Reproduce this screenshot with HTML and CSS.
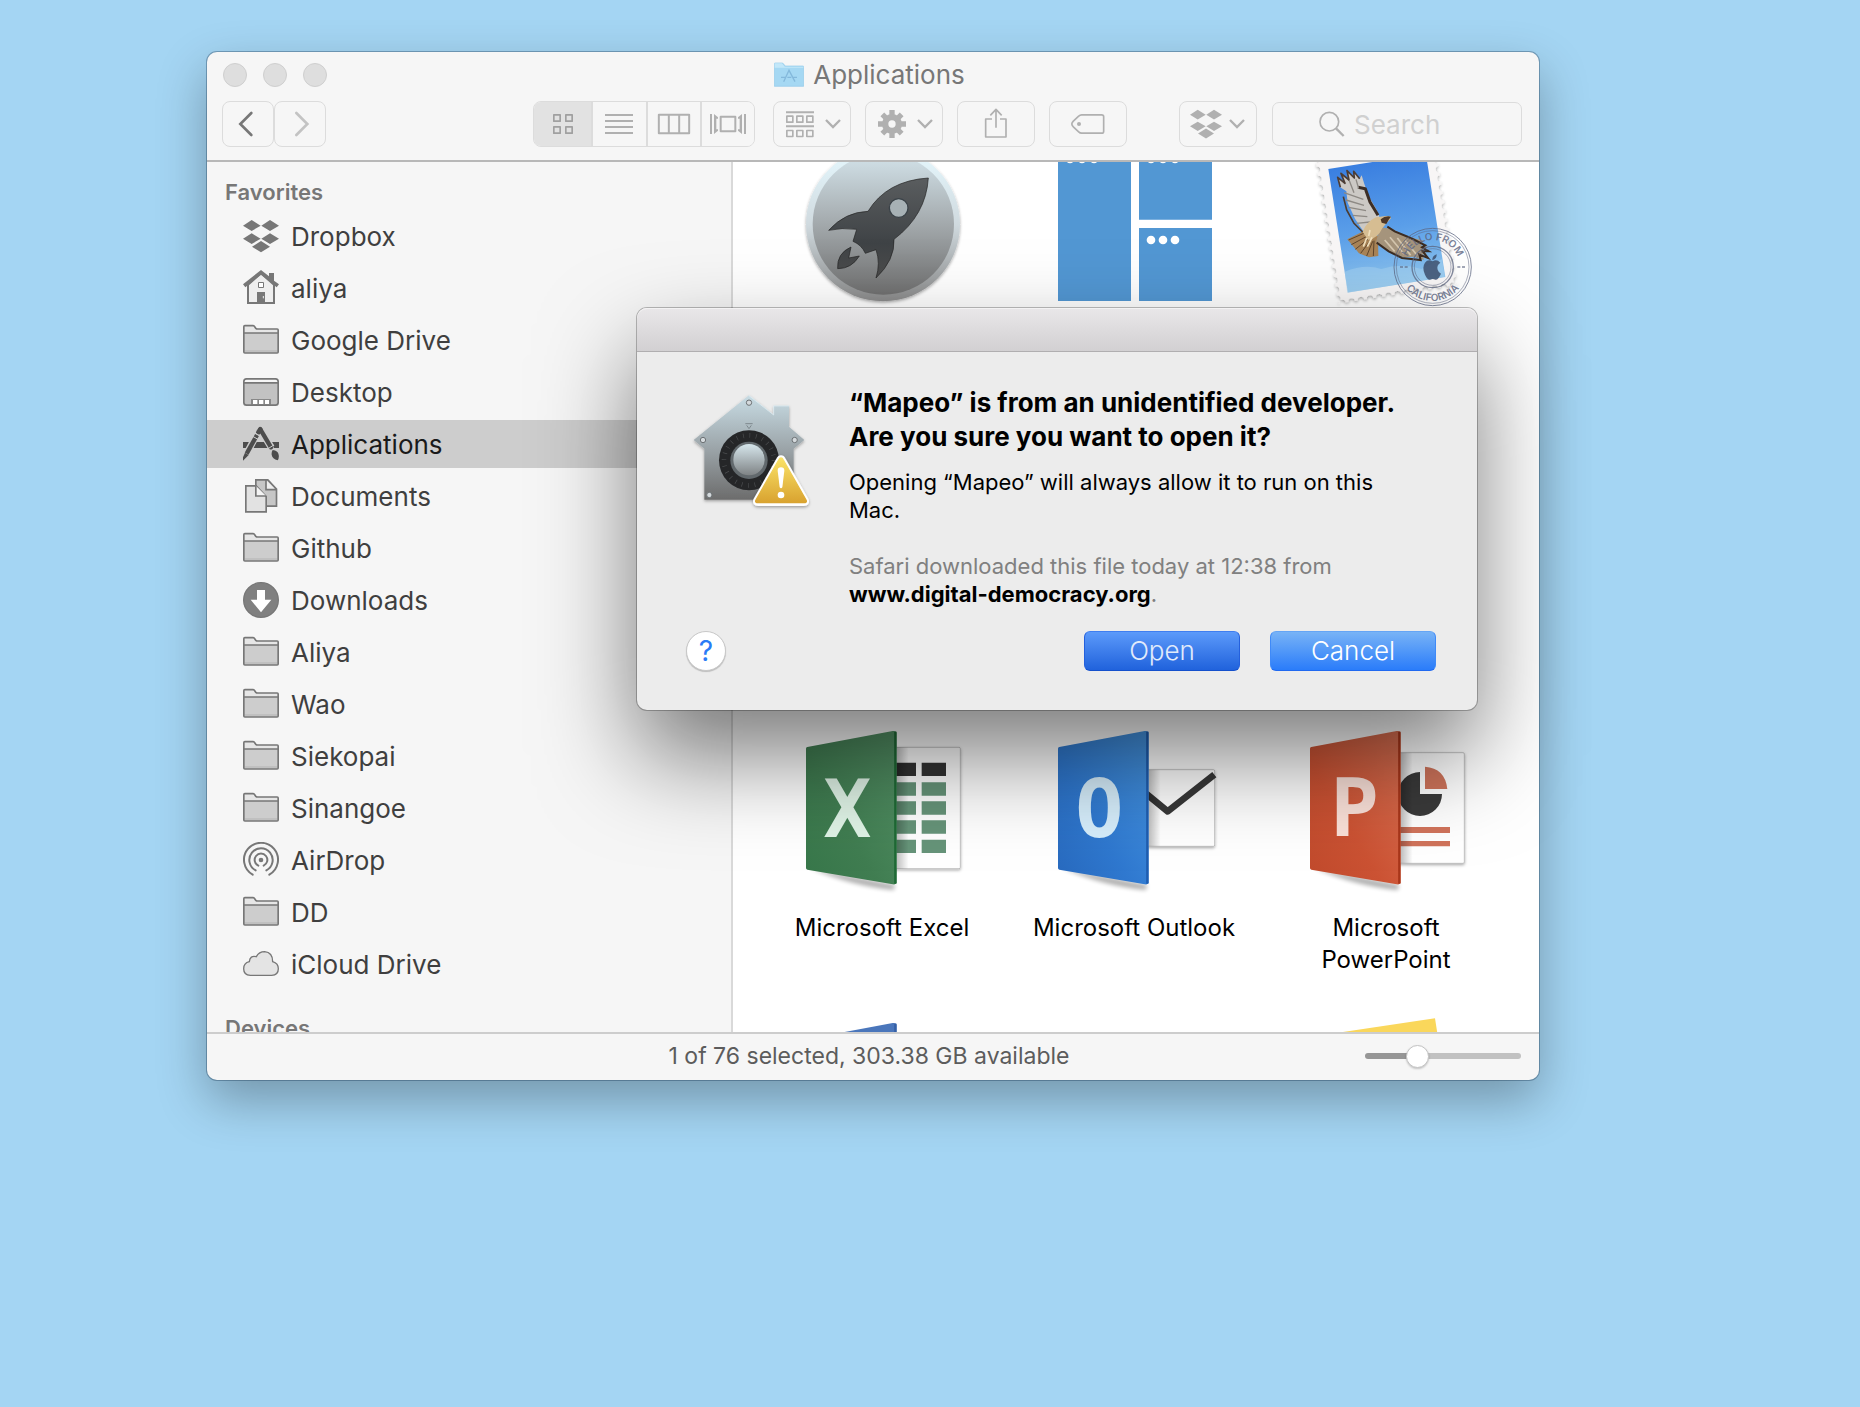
FILE: index.html
```html
<!DOCTYPE html>
<html lang="en">
<head>
<meta charset="utf-8">
<title>Applications</title>
<link rel="stylesheet" href="styles.css">
</head>
<body>
<svg class="defs" aria-hidden="true">
  <defs>
    <symbol id="dropbox" viewBox="129 174 108 108">
      <path d="M129 197l26-17 27 17-27 16zM184 197l26-17 27 17-27 16zM129 236l26-16 27 16-27 16zM184 236l26-16 27 16-27 16zM156 260l27-17 27 17-27 17z"/>
    </symbol>
    <symbol id="folder" viewBox="129 486 108 108">
      <path d="M131.500 520v-20q0-3 3-3h25q3 0 5 4l3 4q2 2 5 2h59q3 0 3 3v10" fill="#e6e6e6"/>
      <path d="M131.500 519h103v57q0 3-3 3h-97q-3 0-3-3z" fill="#cdcdcd"/>
      <path d="M134 573h98" stroke="#bbb" stroke-width="5"/>
      <path d="M131.500 519h103v57q0 3-3 3h-97q-3 0-3-3zv-19q0-3 3-3h25q3 0 5 4l3 4q2 2 5 2h59q3 0 3 3v10" fill="none" stroke="#777" stroke-width="5"/>
    </symbol>
    <symbol id="chevron" viewBox="938 228 54 54">
      <path d="M944 243l21 21 21-21" fill="none" stroke="#b0b0b0" stroke-width="7"/>
    </symbol>
    <linearGradient id="steel" x1="0" y1="0" x2="0" y2="1"><stop offset="0" stop-color="#d3e3ea"/><stop offset=".5" stop-color="#a3a9ac"/><stop offset="1" stop-color="#707070"/></linearGradient>
    <linearGradient id="rim" x1="0" y1="0" x2="0" y2="1"><stop offset="0" stop-color="#e6f9ff"/><stop offset=".5" stop-color="#d0dadf"/><stop offset="1" stop-color="#8b8b8b"/></linearGradient>
    <linearGradient id="rocket" x1="0" y1="0" x2="0" y2="1"><stop offset="0" stop-color="#5a5d5f"/><stop offset=".65" stop-color="#3f4346"/><stop offset="1" stop-color="#4c4c4c"/></linearGradient>
    <linearGradient id="sky" x1="0" y1="0" x2="0" y2="1"><stop offset="0" stop-color="#3a7fe0"/><stop offset=".55" stop-color="#5b9fe9"/><stop offset="1" stop-color="#8fc6ee"/></linearGradient>
    <linearGradient id="excel" x1="0" y1="1" x2="1" y2="0"><stop offset="0" stop-color="#37774a"/><stop offset=".4" stop-color="#407d51"/><stop offset="1" stop-color="#559367"/></linearGradient>
    <linearGradient id="outlook" x1="0" y1="1" x2="1" y2="0"><stop offset="0" stop-color="#2869bd"/><stop offset=".4" stop-color="#2f78cf"/><stop offset="1" stop-color="#4696e3"/></linearGradient>
    <linearGradient id="ppt" x1="0" y1="1" x2="1" y2="0"><stop offset="0" stop-color="#c04a2c"/><stop offset=".4" stop-color="#cb5233"/><stop offset="1" stop-color="#dc7254"/></linearGradient>
    <linearGradient id="house" x1="0" y1="0" x2="0" y2="1"><stop offset="0" stop-color="#c8dce4"/><stop offset=".55" stop-color="#98a0a4"/><stop offset="1" stop-color="#6c6c6c"/></linearGradient>
    <linearGradient id="knob" x1="0" y1="0" x2="0" y2="1"><stop offset="0" stop-color="#d6e6ec"/><stop offset="1" stop-color="#7f8385"/></linearGradient>
    <linearGradient id="warn" x1="0" y1="0" x2="0" y2="1"><stop offset="0" stop-color="#fae267"/><stop offset="1" stop-color="#d9a330"/></linearGradient>
    <linearGradient id="fold" x1="0" y1="0" x2="1" y2="0"><stop offset="0" stop-opacity=".25"/><stop offset="1" stop-opacity="0"/></linearGradient>
    <filter id="soft" x="-20%" y="-20%" width="140%" height="150%"><feDropShadow dx="0" dy="4" stdDeviation="4" flood-opacity=".35"/></filter>
    <filter id="cast" x="-20%" y="-20%" width="140%" height="150%"><feGaussianBlur stdDeviation="7"/></filter>
  </defs>
</svg>

<div class="desktop">
<main class="finder">
  <header class="chrome">
    <div class="titlebar">
      <div class="lights">
        <button aria-label="Close"></button><button aria-label="Minimize"></button><button aria-label="Zoom"></button>
      </div>
      <h1 class="title">
        <svg width="30" height="26" viewBox="798 64 90 78" aria-hidden="true"><path d="M799 137V69q0-2 3-2h20q3 0 5 3l4 6h54q2 0 2 2v59z" fill="#a5d8f3" stroke="#8fc8e8" stroke-width="2"/><path d="M800 68h22l8 10h56v3h-86z" fill="#c2e7f9"/><path d="M827 123l16-34 18 34M819 110h14m5 0h12m6 0h11" fill="none" stroke="#84b9dc" stroke-width="4"/></svg>
        Applications
      </h1>
      <span></span>
    </div>
    <div class="toolbar">
      <button class="tool nav" aria-label="Back"><svg width="36" height="36" viewBox="91 198 108 108"><path d="M155 219l-33 33 33 33" fill="none" stroke="#777" stroke-width="8" stroke-linecap="round"/></svg></button>
      <button class="tool nav" aria-label="Forward"><svg width="36" height="36" viewBox="247 198 108 108"><path d="M290 219l33 33-33 33" fill="none" stroke="#c3c3c3" stroke-width="8" stroke-linecap="round"/></svg></button>
      <span class="spring wide"></span>
      <div class="segments">
        <button class="seg on" aria-label="Icons"><svg width="36" height="36" viewBox="99 198 108 108"><path d="M125.500 224.500h19v19h-19zM161.500 224.500h19v19h-19zM125.500 260.500h19v19h-19zM161.500 260.500h19v19h-19z" fill="none" stroke="#a0a0a0" stroke-width="5" stroke-linejoin="round"/></svg></button>
        <button class="seg" aria-label="List"><svg width="36" height="36" viewBox="267 198 108 108"><path d="M279 225h84M279 243h84M279 261h84M279 279h84" stroke="#b0b0b0" stroke-width="6"/></svg></button>
        <button class="seg" aria-label="Columns"><svg width="36" height="36" viewBox="429 198 108 108"><path d="M437.500 224.500h91v55h-91zM467.500 224v55M498.500 224v55" fill="none" stroke="#b0b0b0" stroke-width="6" stroke-linejoin="round"/></svg></button>
        <button class="seg" aria-label="Cover Flow"><svg width="36" height="36" viewBox="597 198 108 108"><path d="M600 222v60M702 222v60M629 230h44v44h-44z" fill="none" stroke="#b0b0b0" stroke-width="6" stroke-linejoin="round"/><path d="M609 222l12 10v4h-5v32h5v4l-12 10zM693 222l-12 10v4h5v32h-5v4l12 10z" fill="#b0b0b0"/></svg></button>
      </div>
      <button class="tool group" aria-label="Arrange"><svg width="36" height="36" viewBox="813 200 108 108"><path d="M825 219h84M825 261h84" stroke="#b0b0b0" stroke-width="6"/><path d="M827.500 230.500h18v18h-18zM857.500 230.500h18v18h-18zM887.500 230.500h18v18h-18zM827.500 273.500h18v18h-18zM857.500 273.500h18v18h-18zM887.500 273.500h18v18h-18z" fill="none" stroke="#b0b0b0" stroke-width="5" stroke-linejoin="round"/></svg><svg width="18" height="18"><use href="#chevron"/></svg></button>
      <button class="tool" aria-label="Action"><svg width="36" height="36" viewBox="-54 -54 108 108"><path d="M0-42V42M-42 0H42M-29-29L29 29M-29 29L29-29" stroke="#b0b0b0" stroke-width="16"/><circle r="30" fill="#b0b0b0"/><circle r="11" fill="#f6f6f6"/></svg><svg width="18" height="18"><use href="#chevron"/></svg></button>
      <button class="tool" aria-label="Share"><svg width="36" height="36" viewBox="1401 198 108 108"><path d="M1443 237h-19v54h61v-54h-18M1455 263v-54M1438 226l17-18 17 18" fill="none" stroke="#b0b0b0" stroke-width="5" stroke-linejoin="round"/></svg></button>
      <button class="tool" aria-label="Tags"><svg width="36" height="36" viewBox="145 198 108 108"><path d="M180 224.500h60q6 0 6 6v43q0 6-6 6h-60q-5 0-9-4l-16-15q-9-8 0-17l16-15q4-4 9-4z" fill="none" stroke="#b0b0b0" stroke-width="5"/><circle cx="172" cy="252" r="6" fill="#b0b0b0"/></svg></button>
      <span class="spring"></span>
      <button class="tool" aria-label="Dropbox"><svg width="32" height="32" fill="#b0b0b0"><use href="#dropbox"/></svg><svg width="18" height="18"><use href="#chevron"/></svg></button>
      <label class="search">
        <svg width="28" height="28" viewBox="883 214 84 84" aria-hidden="true"><circle cx="917" cy="249" r="28" fill="none" stroke="#b0b0b0" stroke-width="5"/><path d="M937 269l23 23" stroke="#b0b0b0" stroke-width="7"/></svg>
        <input type="search" placeholder="Search" aria-label="Search">
      </label>
    </div>
  </header>

  <div class="panes">
    <nav class="sidebar">
      <h2>Favorites</h2>
      <a href="#"><svg fill="#777"><use href="#dropbox"/></svg>Dropbox</a>
      <a href="#"><svg viewBox="129 330 108 108"><path d="M144 374l39-34 39 34v55h-78z" fill="#eee" stroke="#777" stroke-width="6"/><path d="M129 373l54-43 24 19v-10h15v23l15 11-7 9-47-38-47 38zM171 396h24v34h-24z" fill="#777"/><path d="M175.500 367.500h15v15h-15z" fill="#fff" stroke="#777" stroke-width="3"/><path d="M190 408v7" stroke="#eee" stroke-width="3"/></svg>aliya</a>
      <a href="#"><svg><use href="#folder"/></svg>Google Drive</a>
      <a href="#"><svg viewBox="129 642 108 108"><rect x="131.500" y="656.500" width="103" height="79" rx="8" fill="#c2c2c2"/><path d="M132 668v-4q0-7 7-7h88q7 0 7 7v4z" fill="#f6f6f6"/><path d="M132 668.500h102" stroke="#777" stroke-width="5"/><path d="M153 717h60v17h-60z" fill="#888"/><path d="M159 720h13v12h-13zM177 720h13v12h-13zM195 720h12v12h-12z" fill="#fff"/><rect x="131.500" y="656.500" width="103" height="79" rx="8" fill="none" stroke="#777" stroke-width="5"/></svg>Desktop</a>
      <a href="#" class="current" aria-current="page"><svg viewBox="129 798 108 108"><path d="M129 846h24l-9 18h-15zM169 846h29l12 18h-52zM213 846h24v18h-15z" fill="#4d4d4d"/><path d="M181 809l-6 9M170 824l-31 59M181 808l33 55" stroke="#cdcdcd" stroke-width="21"/><path d="M181 808l-6 9" stroke="#4d4d4d" stroke-width="14" stroke-linecap="round"/><path d="M181 808l32 54" stroke="#4d4d4d" stroke-width="13" stroke-linecap="round"/><path d="M171 825l-31 56" stroke="#4d4d4d" stroke-width="13"/><path d="M163 818l16 9M158 829l16 9M204 866l16-10" stroke="#cdcdcd" stroke-width="3"/><path d="M135 878l11 7-17 17v-10zM218 870q16 2 18 14 2 10-3 17-16-4-18-17-1-8 3-14z" fill="#4d4d4d"/></svg>Applications</a>
      <a href="#"><svg viewBox="129 954 108 108"><path d="M167.500 959.500h36l26 28v51h-62z" fill="#c6c6c6"/><path d="M198 960v29h32z" fill="#eee"/><path d="M167.500 959.500h36l26 28v51h-62zM198 960v29h32" fill="none" stroke="#777" stroke-width="5"/><path d="M137.500 977.500h31l30 32v46h-61z" fill="#e2e2e2" stroke="#777" stroke-width="5"/><path d="M167.500 977v31h31" fill="#f4f4f4" stroke="#777" stroke-width="5"/></svg>Documents</a>
      <a href="#"><svg><use href="#folder"/></svg>Github</a>
      <a href="#"><svg viewBox="129 6 108 108"><circle cx="183" cy="60" r="52" fill="#808080" stroke="#777" stroke-width="4"/><path d="M171 30h24v29h19l-31 38-31-38h19z" fill="#fff"/></svg>Downloads</a>
      <a href="#"><svg><use href="#folder"/></svg>Aliya</a>
      <a href="#"><svg><use href="#folder"/></svg>Wao</a>
      <a href="#"><svg><use href="#folder"/></svg>Siekopai</a>
      <a href="#"><svg><use href="#folder"/></svg>Sinangoe</a>
      <a href="#"><svg viewBox="129 786 108 108"><circle cx="183" cy="840" r="7" fill="#777"/><path d="M175 857a19 19 0 1 1 16 0M167 871a35 35 0 1 1 32 0M158 884a51 51 0 1 1 50 0" fill="none" stroke="#777" stroke-width="6" stroke-linecap="round"/></svg>AirDrop</a>
      <a href="#"><svg><use href="#folder"/></svg>DD</a>
      <a href="#"><svg viewBox="129 1098 108 108"><path d="M151 1186q-20-1-20-20 0-17 17-21 2-20 21-15 8-15 25-15 24 2 24 30 17 5 17 21 0 19-20 20z" fill="#e4e4e4" stroke="#777" stroke-width="4"/></svg>iCloud Drive</a>
      <h2 class="devices">Devices</h2>
    </nav>

    <section class="icons" aria-label="Applications">
      <div class="grid">
        <a class="app row-a" href="#" aria-label="Launchpad"><svg viewBox="96 -18 480 480"><g filter="url(#soft)"><circle cx="339" cy="223" r="231" fill="url(#rim)"/></g><circle cx="340" cy="222" r="212" fill="url(#steel)"/><path d="M475 84Q350 92 294 184 225 186 176 241 215 232 260 238L249 274Q275 285 286 310L318 299Q332 340 318 384 375 330 372 268 468 195 475 84zM243 291Q200 310 203 356 245 356 268 318L236 324z" fill="url(#rocket)" stroke="#222" stroke-width="2"/><circle cx="386" cy="174" r="28" fill="#a7b1b5" stroke="#3a4248" stroke-width="4"/></svg></a>
        <a class="app row-a" href="#" aria-label="Mission Control"><svg viewBox="852 -18 480 480"><path d="M864-9h219v462H864zM1107-9h219v218h-219zM1107 234h219v219h-219z" fill="#5297d3"/><g fill="#fff"><circle cx="900" cy="27" r="13"/><circle cx="936" cy="27" r="13"/><circle cx="972" cy="27" r="13"/><circle cx="1143" cy="27" r="13"/><circle cx="1179" cy="27" r="13"/><circle cx="1215" cy="27" r="13"/><circle cx="1143" cy="270" r="13"/><circle cx="1179" cy="270" r="13"/><circle cx="1215" cy="270" r="13"/></g></svg></a>
        <a class="app row-a" href="#" aria-label="Mail"><svg viewBox="48 -18 480 480">
          <defs><mask id="perf" maskUnits="userSpaceOnUse" x="0" y="-60" width="600" height="600"><rect x="81" y="24" width="362" height="437" fill="#fff"/><rect x="81" y="24" width="362" height="437" fill="none" stroke="#000" stroke-width="20" stroke-linecap="round" stroke-dasharray="0 28"/></mask>
          <path id="arcTop" d="M347 351a81 81 0 0 1 162 0"/><path id="arcBot" d="M326 351a102 102 0 0 0 204 0"/></defs>
          <g filter="url(#soft)"><g transform="rotate(-9 115 57)"><rect x="81" y="24" width="362" height="437" fill="#f8f6f6" mask="url(#perf)"/></g></g>
          <rect x="115" y="57" width="296" height="375" fill="url(#sky)" transform="rotate(-9 115 57)"/>
          <path d="M164 365q60-24 110-8 60-20 120 0l62-30 8 53-292 48z" fill="#a8d3f1" opacity=".5"/>
          <path d="M172 268l60-30 32 20 1 60-28 4-30-12z" fill="#a88356"/>
          <path d="M176 270l50-22M184 284l48-26M196 298l40-32M212 310l30-40M230 318l18-44M250 318l2-46" stroke="#5e452c" stroke-width="3"/>
          <path d="M151 112l-8-30 22 18-12-30 24 20-6-28 22 22-2-20 18 22 6-10 8 26 14 38 22 38 16 40-30 28-26-4-24-36-22-48-4-34z" fill="#ccc9c5"/>
          <path d="M151 112l-8-30 22 18-12-30 24 20-6-28 22 22-2-20 18 22" fill="none" stroke="#4c3c34" stroke-width="5" stroke-linejoin="round"/>
          <path d="M204 112l22 4 14 40 24 40" fill="none" stroke="#3c2e26" stroke-width="9" stroke-linejoin="round"/>
          <path d="M162 128l58 20M168 150l54 16M176 172l52 10M188 196l44 4M200 220l40-4M178 92l14 36M198 88l8 28" stroke="#8d8984" stroke-width="4"/>
          <path d="M160 140l10 40 22 40 26 26" fill="none" stroke="#4c3c30" stroke-width="5"/>
          <path d="M270 232l34 4 50 24 46 12-8 14 22 6-16 8 12 12-14 2 6 16-30-10-34 2-46-20-34-26z" fill="#a5947c"/>
          <path d="M292 230l22 14 48 20 44 22-10 6 20 12-18 0 16 20-26-10 4 16-56-6-40-20-36-26" fill="none" stroke="#3d2d22" stroke-width="6"/>
          <path d="M284 270l30 34M300 262l42 50M322 264l40 52M346 272l34 42" stroke="#d4c6ae" stroke-width="5"/>
          <path d="M218 246q10-30 40-44l30-4q18-2 14 8-16 16-26 30-12 28-42 34z" fill="#d6bd92"/>
          <path d="M272 208q14-12 31-8l-6 8-8 14-14-4z" fill="#4d3728"/><path d="M230 264l-10 26M246 262l-14 28M240 240l-4 18" stroke="#f0e0bd" stroke-width="5"/>
          <g fill="none" stroke="#5b6480" stroke-opacity=".75"><circle cx="428" cy="351" r="116" stroke-width="3"/><circle cx="428" cy="351" r="109" stroke-width="2"/><circle cx="428" cy="351" r="62" stroke-width="4"/><circle cx="428" cy="351" r="55" stroke-width="2"/><path d="M330 351h9m5 0h9M502 351h9m5 0h9" stroke-width="4"/></g>
          <g class="seal"><text><textPath href="#arcTop" startOffset="50%" text-anchor="middle">HELLO FROM</textPath></text><text><textPath href="#arcBot" startOffset="50%" text-anchor="middle">CALIFORNIA</textPath></text></g>
          <path d="M428 334q12-8 23 4-12 8-8 21 3 9 10 12-9 20-17 18-8-4-16 0-8 1-15-15-10-22 0-36 9-12 23-4zM427 331q-1-13 13-18 1 13-13 18z" fill="#3e506f" opacity=".85"/>
        </svg></a>

        <a class="app row-c" href="#"><svg viewBox="96 54 480 480"><path d="M120 474L375 524 372 540Q250 530 120 474z" opacity=".3" filter="url(#cast)"/><rect x="300" y="112" width="271" height="364" rx="4" fill="#fff" stroke="#aaa" stroke-width="2" filter="url(#soft)"/><path d="M370 158h68v40h-68zM455 158h73v40h-73z" fill="#333"/><path d="M370 217h68v40h-68zM455 217h73v40h-73zM370 274h68v40h-68zM455 274h73v40h-73zM370 331h68v40h-68zM455 331h73v40h-73zM370 389h68v40h-68zM455 389h73v40h-73z" fill="#669479"/><path d="M380 112h36v364h-36z" fill="url(#fold)"/><path d="M108 116q0-4 4-5L368 63q12-1 12 6v448q0 8-12 6L112 479q-4-1-4-5z" fill="url(#excel)"/><path d="M376 65v456" stroke="#1f6a35" stroke-width="7"/><text x="232" y="382" class="glyph" fill="#dff3e6">X</text></svg>Microsoft Excel</a>
        <a class="app row-c" href="#"><svg viewBox="852 54 480 480"><path d="M876 474L1131 524 1128 540Q1006 530 876 474z" opacity=".3" filter="url(#cast)"/><rect x="1050" y="179" width="284" height="230" rx="4" fill="#fff" stroke="#aaa" stroke-width="2" filter="url(#soft)"/><path d="M1120 244l73 60 140-110" fill="none" stroke="#383838" stroke-width="20" stroke-linejoin="round"/><path d="M1136 179h36v230h-36z" fill="url(#fold)"/><path d="M864 116q0-4 4-5l256-48q12-1 12 6v448q0 8-12 6l-256-44q-4-1-4-5z" fill="url(#outlook)"/><path d="M1132 65v456" stroke="#1f5db0" stroke-width="7"/><text x="988" y="382" class="glyph" fill="#d5edfb">O</text></svg>Microsoft Outlook</a>
        <a class="app row-c" href="#"><svg viewBox="198 54 480 480"><path d="M222 474L477 524 474 540Q352 530 222 474z" opacity=".3" filter="url(#cast)"/><rect x="400" y="128" width="273" height="332" rx="4" fill="#fff" stroke="#aaa" stroke-width="2" filter="url(#soft)"/><path d="M540 186v66h66a66 66 0 1 1-66-66z" fill="#3a3a3a"/><path d="M555 170q60 4 67 67h-67z" fill="#cf745b"/><path d="M480 351h150v18H480zM480 393h150v16H480z" fill="#d0735b"/><path d="M482 128h36v332h-36z" fill="url(#fold)"/><path d="M210 116q0-4 4-5l256-48q12-1 12 6v448q0 8-12 6l-256-44q-4-1-4-5z" fill="url(#ppt)"/><path d="M478 65v456" stroke="#a8361a" stroke-width="7"/><text x="344" y="379" class="glyph" fill="#fae0d8">P</text></svg>Microsoft PowerPoint</a>

        <a class="app row-d" href="#" aria-label="Microsoft Word"><svg viewBox="96 930 480 480"><path d="M108 992q0-4 4-5l256-48q12-1 12 6v448l-272-45z" fill="#4a76bb"/><path d="M376 941v456" stroke="#3560a6" stroke-width="7"/></svg></a>
        <a class="app row-d last" href="#" aria-label="Notes"><svg viewBox="198 930 480 480"><path d="M201 982l384-57 60 380-384 56z" fill="#fad75b"/></svg></a>
      </div>
    </section>
  </div>

  <footer class="status">
    <span></span>
    <p>1 of 76 selected, 303.38 GB available</p>
    <input type="range" min="0" max="100" value="31" aria-label="Icon size">
  </footer>

  <section class="dialog" role="dialog" aria-labelledby="ask">
    <div class="bar"></div>
    <div class="message">
      <svg class="badge" viewBox="33 30 360 360" aria-hidden="true">
        <g filter="url(#soft)"><path d="M207 46l74 58V77h46v63l46 40-32 26v153H73V206l-32-26z" fill="url(#house)"/></g>
        <path d="M207 47l74 58V78h46" fill="none" stroke="#e2f2f8" stroke-width="2"/>
        <g fill="#d5dadd" stroke="#6d7275" stroke-width="3"><circle cx="207" cy="68" r="8"/><circle cx="69" cy="180" r="8"/><circle cx="344" cy="180" r="8"/><circle cx="88" cy="345" r="8"/></g>
        <path d="M196 131h22M200 136l7 10 7-10" fill="none" stroke="#7e898e" stroke-width="3"/>
        <circle cx="207" cy="241" r="90" fill="#252628"/><circle cx="207" cy="241" r="75" fill="none" stroke="#4b4d4f" stroke-width="14" stroke-dasharray="2 17.600"/>
        <circle cx="207" cy="241" r="56" fill="#62696d"/><circle cx="207" cy="239" r="47" fill="url(#knob)"/>
        <g filter="url(#soft)"><path d="M303 234q4 0 7 6l68 120q4 10-7 10H235q-11 0-7-10l68-120q3-6 7-6z" fill="#fff" stroke="#fff" stroke-width="16" stroke-linejoin="round"/></g>
        <path d="M303 234q4 0 7 6l68 120q4 8-7 8H235q-11 0-7-8l68-120q3-6 7-6z" fill="url(#warn)" stroke="url(#warn)" stroke-width="4" stroke-linejoin="round"/>
        <path d="M293 272q0-10 10-10t10 10l-6 50q-4 6-8 0z" fill="#fff"/><circle cx="303" cy="345" r="10" fill="#fff"/>
      </svg>
      <div class="copy">
        <h2 id="ask">“Mapeo” is from an unidentified developer. Are you sure you want to open it?</h2>
        <p>Opening “Mapeo” will always allow it to run on this Mac.</p>
        <p class="origin">Safari downloaded this file today at 12:38 from <strong>www.digital-democracy.org</strong>.</p>
      </div>
    </div>
    <div class="actions">
      <button class="help" aria-label="Help">?</button>
      <button class="push open">Open</button>
      <button class="push cancel">Cancel</button>
    </div>
  </section>
</main>
</div>
</body>
</html>
```
FILE: styles.css
```css
* { box-sizing: border-box; }

body {
  margin: 0;
  background: #a4d5f3;
  font-family: Inter, "Liberation Sans", sans-serif;
  font-size: 26px;
  color: #000;
}

h1, h2, p { margin: 0; font-weight: 400; }
a { color: inherit; text-decoration: none; }
button, input { font: inherit; padding: 0; margin: 0; }
svg { display: block; flex: none; }
.defs { position: absolute; width: 0; height: 0; }

.desktop {
  display: flex;
  height: 100vh;
  min-height: 1100px;
  padding: 52px 321px 327px 207px;
}

.finder {
  position: relative;
  display: flex;
  flex-direction: column;
  flex: 1;
  min-width: 1200px;
  border-radius: 10px;
  background: #f6f6f6;
  box-shadow: 0 0 0 1px rgba(0, 30, 60, .3), 0 20px 50px rgba(0, 0, 0, .3);
}

/* Title bar and toolbar */
.chrome {
  flex: none;
  height: 110px;
  padding: 0 17px 0 15px;
  border-bottom: 2px solid #b8b8b8;
}

.titlebar {
  display: grid;
  grid-template-columns: 1fr auto 1fr;
  align-items: center;
  height: 45px;
  padding: 0 6px 0 1px;
}

.lights { display: flex; gap: 16px; }
.lights button {
  width: 24px;
  height: 24px;
  border: 1px solid #cfcfcf;
  border-radius: 50%;
  background: #dedede;
}

.title {
  display: flex;
  align-items: center;
  gap: 9px;
  font-size: 26px;
  color: #777;
}

.toolbar { display: flex; align-items: center; margin-top: 4px; height: 46px; }
.spring { flex: 1; }
.spring.wide { flex: 4; }

.tool {
  display: flex;
  align-items: center;
  justify-content: center;
  gap: 6px;
  width: 78px;
  height: 46px;
  border: 1px solid #dcdcdc;
  border-radius: 8px;
  background: #f6f6f6;
}
.tool.nav { width: 52px; }
.tool + .tool:not(.nav) { margin-left: 14px; }

.segments {
  display: flex;
  width: 222px;
  height: 46px;
  margin-right: 18px;
  border: 1px solid #dcdcdc;
  border-radius: 8px;
  overflow: hidden;
}
.seg {
  display: flex;
  flex: 1;
  align-items: center;
  justify-content: center;
  border: 0;
  border-left: 2px solid #dcdcdc;
  background: #f6f6f6;
}
.seg.on { flex: 0 0 57px; border-left: 0; background: #e2e2e2; }

.search {
  display: flex;
  align-items: center;
  gap: 8px;
  width: 250px;
  height: 44px;
  margin-left: 15px;
  padding-left: 45px;
  border: 1px solid #dcdcdc;
  border-radius: 7px;
}
.search input {
  width: 150px;
  border: 0;
  outline: 0;
  background: transparent;
}
.search input::placeholder { color: #d0d0d0; opacity: 1; }

/* Sidebar */
.panes { display: flex; flex: 1; min-height: 0; overflow: hidden; }

.sidebar {
  flex: none;
  width: 526px;
  padding-top: 16px;
  border-right: 2px solid #d9d9d9;
  overflow: hidden;
}
.sidebar h2 {
  margin-bottom: 6px;
  padding-left: 18px;
  font-size: 22px;
  font-weight: 600;
  line-height: 28px;
  color: #777;
}
.sidebar .devices { margin-top: 26px; }
.sidebar a {
  display: flex;
  align-items: center;
  gap: 12px;
  height: 48px;
  margin-bottom: 4px;
  padding-left: 36px;
  color: #3f3f3f;
}
.sidebar svg { width: 36px; height: 36px; }
.sidebar .current { background: #cdcdcd; color: #1a1a1a; }

/* Icon view, scrolled part of the way down */
.icons { flex: 1; background: #fff; overflow: hidden; }
.grid {
  display: grid;
  grid-template-columns: repeat(3, 252px);
  grid-auto-rows: 292px;
  justify-content: center;
  margin-top: -18px;
  padding-right: 4px;
}
.app {
  display: flex;
  flex-direction: column;
  align-items: center;
  gap: 24px;
  padding: 0 20px;
  font-size: 24px;
  line-height: 32px;
  text-align: center;
}
.app svg { width: 160px; height: 160px; overflow: visible; }
.row-a { grid-row: 1; }
.row-c { grid-row: 3; }
.row-d { grid-row: 4; }
.last { grid-column: 3; }

.glyph {
  font: 700 240px "DejaVu Sans Mono", monospace;
  text-anchor: middle;
}
.seal text { font: 600 30px Inter, sans-serif; fill: #5b6480; fill-opacity: .8; }

/* Status bar */
.status {
  display: grid;
  grid-template-columns: 1fr auto 1fr;
  align-items: center;
  flex: none;
  height: 48px;
  padding: 0 18px 2px 10px;
  border-top: 2px solid #cdcdcd;
  font-size: 23px;
  color: #5c5c5c;
}
.status input {
  appearance: none;
  justify-self: end;
  width: 156px;
  height: 24px;
  background: transparent;
}
.status input::-webkit-slider-runnable-track {
  height: 6px;
  border-radius: 3px;
  background: linear-gradient(90deg, #969696 34%, #c1c1c1 34%);
}
.status input::-webkit-slider-thumb {
  appearance: none;
  width: 23px;
  height: 23px;
  margin-top: -8px;
  border: 1px solid #c4c4c4;
  border-radius: 50%;
  background: #fff;
  box-shadow: 0 1px 2px rgba(0, 0, 0, .2);
}

/* Alert */
.dialog {
  position: absolute;
  top: 256px;
  left: 430px;
  right: 62px;
  border-radius: 10px;
  background: #ececec;
  box-shadow: 0 0 0 1px rgba(0, 0, 0, .25), 0 46px 96px rgba(0, 0, 0, .52);
}
.bar {
  height: 44px;
  border-bottom: 1px solid #b0aeb0;
  border-radius: 10px 10px 0 0;
  background: linear-gradient(#e9e7e9, #d2d0d2);
  box-shadow: inset 0 1px 0 #f3f2f3;
}
.message { display: flex; gap: 38px; padding: 34px 60px 0 54px; }
.badge { width: 120px; height: 120px; margin-top: 4px; overflow: visible; }
.copy { flex: 1; font-size: 22px; line-height: 28px; }
.copy h2 { margin-bottom: 14px; font-size: 26px; font-weight: 700; line-height: 34px; }
.origin { margin-top: 28px; color: #808080; }
.origin strong { color: #000; }
.actions {
  display: flex;
  align-items: center;
  padding: 23px 41px 39px 49px;
}
.help {
  width: 40px;
  height: 40px;
  margin-right: auto;
  border: 1px solid #c8c8c8;
  border-radius: 50%;
  background: #fff;
  box-shadow: 0 1px 1px rgba(0, 0, 0, .2);
  font-size: 28px;
  line-height: 36px;
  color: #2a7bf6;
}
.push {
  height: 40px;
  border: 1px solid;
  border-radius: 6px;
  font-size: 26px;
  font-weight: 300;
  line-height: 36px;
}
.open {
  width: 156px;
  border-color: #3f7ef0 #2460dd #1450cc;
  background: linear-gradient(#5c9afa, #2062dc);
  color: #e1ebfb;
}
.cancel {
  width: 166px;
  margin-left: 30px;
  border-color: #65a5f5 #3f8af8 #2069f0;
  background: linear-gradient(#78b3f6, #2a7cfa);
  color: #fff;
}
```
